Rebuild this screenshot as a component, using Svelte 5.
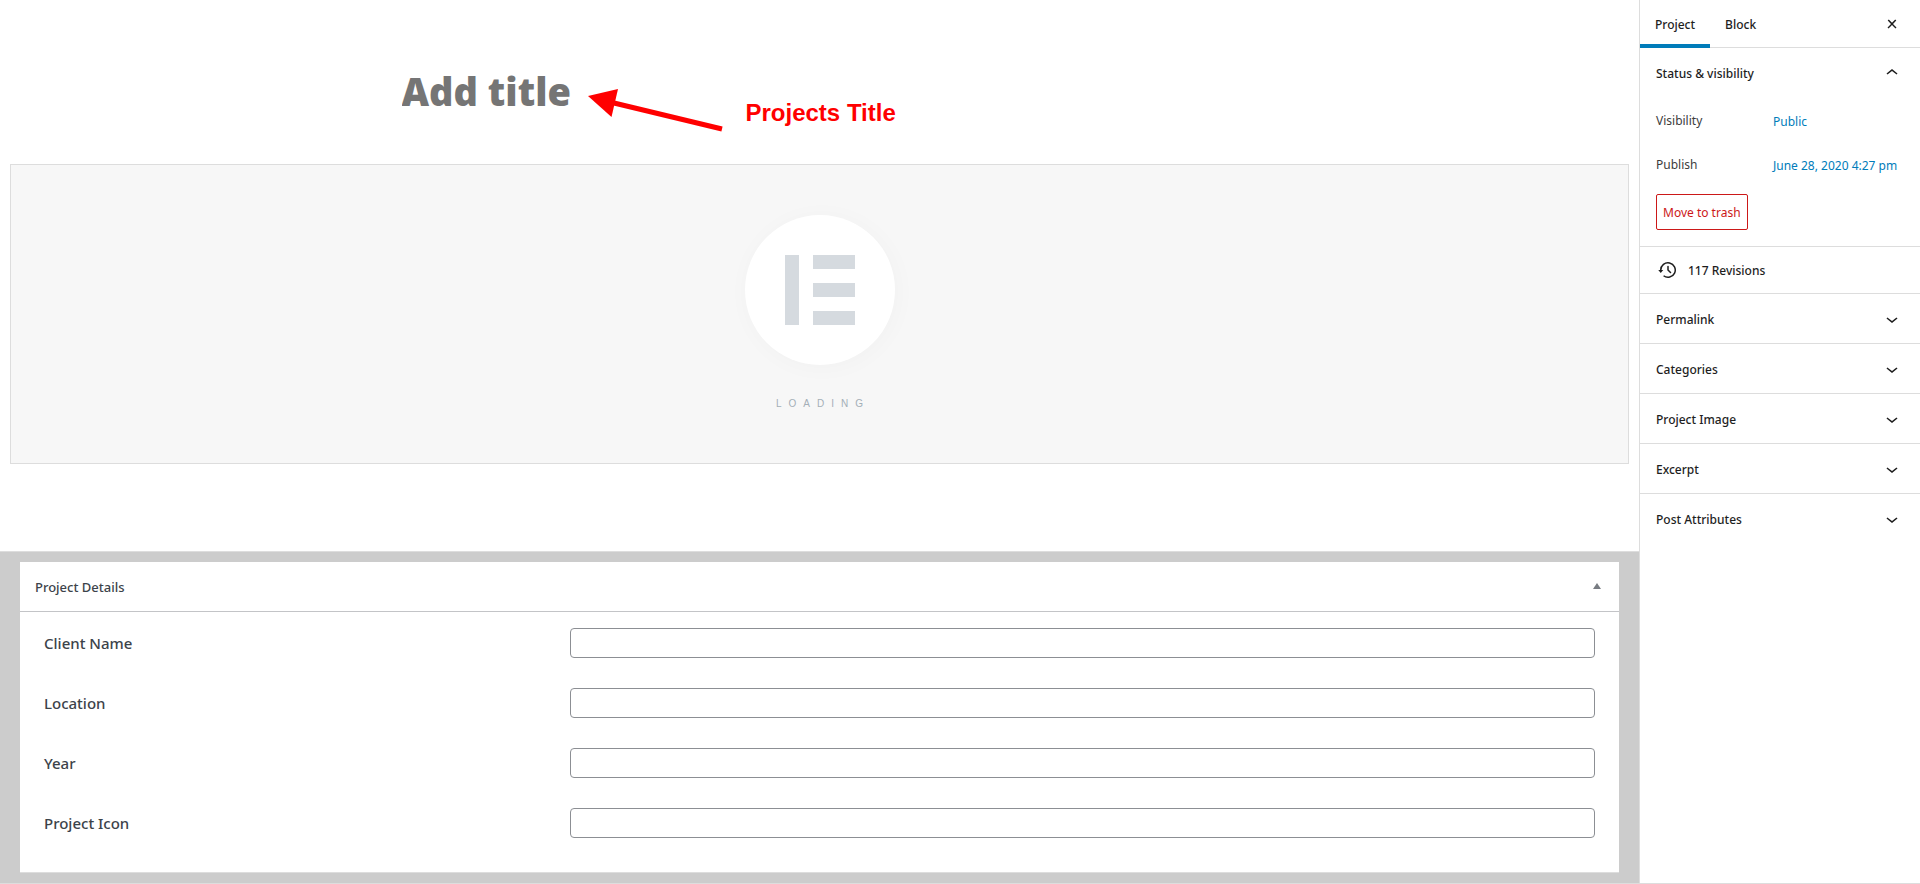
<script>
  const fields = [
    { id: 'client-name', label: 'Client Name' },
    { id: 'location', label: 'Location' },
    { id: 'year', label: 'Year' },
    { id: 'project-icon', label: 'Project Icon' }
  ];
  const panels = ['Permalink', 'Categories', 'Project Image', 'Excerpt', 'Post Attributes'];
</script>

<div class="editor">
  <main class="content">
    <section class="canvas">
      <div class="title-wrap">
        <input class="title" type="text" placeholder="Add title" aria-label="Add title" />
        <div class="note">
          <svg width="138" height="48" viewBox="0 0 138 48" aria-hidden="true">
            <path d="M27 15L135 41" stroke="#f00" stroke-width="5" fill="none" />
            <path d="M1 8L31 1L24.500 29z" fill="#f00" />
          </svg>
          <span>Projects Title</span>
        </div>
      </div>
      <div class="loader">
        <div class="disc">
          <svg width="70" height="70" viewBox="0 0 70 70" fill="#d5dadf" aria-hidden="true">
            <path d="M0 0h14v70H0zM28 0h42v14H28zM28 28h42v14H28zM28 56h42v14H28z" />
          </svg>
        </div>
        <div class="loading">LOADING</div>
      </div>
    </section>

    <section class="metaboxes">
      <div class="metabox">
        <header>
          <h2>Project Details</h2>
          <button type="button" class="toggle" aria-label="Toggle panel">
            <svg width="8" height="6" viewBox="0 0 8 6"><path d="M4 0L8 6H0z" fill="#787c82" /></svg>
          </button>
        </header>
        <form>
          {#each fields as f (f.id)}
            <div class="field">
              <label for={f.id}>{f.label}</label>
              <input id={f.id} type="text" />
            </div>
          {/each}
        </form>
      </div>
    </section>
  </main>

  <aside class="sidebar">
    <nav class="tabs">
      <button type="button" class="tab active">Project</button>
      <button type="button" class="tab">Block</button>
      <button type="button" class="close" aria-label="Close settings">
        <svg class="icon" viewBox="0 0 24 24"><path d="M13 11.900l3.300-3.400-1.100-1-3.200 3.300-3.200-3.300-1.100 1 3.300 3.400-3.500 3.600 1 1L12 13l3.500 3.500 1-1z" /></svg>
      </button>
    </nav>

    <section class="status">
      <button type="button" class="panel-head">
        <span>Status &amp; visibility</span>
        <svg class="icon" viewBox="0 0 24 24"><path d="M6.500 12.400L12 8l5.500 4.400-.900 1.200L12 10l-4.500 3.600-1-1.200z" /></svg>
      </button>
      <div class="row"><span>Visibility</span><button type="button">Public</button></div>
      <div class="row"><span>Publish</span><button type="button">June 28, 2020 4:27 pm</button></div>
      <button type="button" class="trash">Move to trash</button>
    </section>

    <button type="button" class="revisions">
      <svg class="icon" viewBox="0 0 24 24"><path d="M5.500 12h1.750l-2.500 3-2.500-3H4a8 8 0 113.134 6.350l.907-1.194A6.500 6.500 0 105.500 12zm9.530 1.970l-2.280-2.280V8.500a.750.750 0 00-1.500 0V12a.747.747 0 00.218.529l2.502 2.502a.750.750 0 101.060-1.061z" /></svg>
      <span>117 Revisions</span>
    </button>

    {#each panels as p (p)}
      <button type="button" class="panel-head bordered">
        <span>{p}</span>
        <svg class="icon" viewBox="0 0 24 24"><path d="M17.500 11.600L12 16l-5.500-4.400.900-1.200L12 14l4.500-3.600 1 1.200z" /></svg>
      </button>
    {/each}
  </aside>
</div>

<style>
  :global(body) {
    margin: 0;
    background: #fff;
  }
  .editor,
  .editor * {
    box-sizing: border-box;
  }
  .editor {
    display: flex;
    min-height: 100vh;
    border-bottom: 1px solid #ddd;
    font-family: 'Noto Sans', 'Open Sans', sans-serif;
    font-size: 12px;
    line-height: 18px;
    color: #1e1e1e;
  }
  button {
    margin: 0;
    padding: 0;
    border: 0;
    background: none;
    font: inherit;
    color: inherit;
    cursor: pointer;
  }
  .icon {
    width: 24px;
    height: 24px;
    fill: currentColor;
    flex: none;
  }
  .content {
    flex: 1;
    min-width: 0;
    display: flex;
    flex-direction: column;
  }
  .canvas {
    flex: 1;
    padding: 64px 10px 32px;
  }
  .title-wrap {
    position: relative;
    width: 100%;
    max-width: 836px;
    margin: 0 auto 46px;
  }
  .title {
    display: block;
    width: 100%;
    height: 54px;
    padding: 0;
    border: 0;
    outline: 0;
    background: none;
    font: 800 38px/54px 'Open Sans', 'Noto Sans', sans-serif;
    color: #1e1e1e;
  }
  .title::placeholder {
    color: #757575;
    opacity: 1;
  }
  .note {
    position: absolute;
    left: 185px;
    top: 24px;
    display: flex;
    gap: 21px;
    color: #f00;
    font: bold 24px/50px 'Liberation Sans', Arial, sans-serif;
    white-space: nowrap;
    pointer-events: none;
  }
  .loader {
    display: flex;
    flex-direction: column;
    align-items: center;
    gap: 30px;
    padding: 50px 0;
    height: 300px;
    border: 1px solid #ddd;
    background: #f7f7f7;
  }
  .disc {
    display: grid;
    place-items: center;
    width: 150px;
    height: 150px;
    flex: none;
    border-radius: 50%;
    background: #fff;
    box-shadow: 2px 2px 20px 4px rgba(0, 0, 0, 0.02);
  }
  .loading {
    font: 10px/18px 'Liberation Sans', Arial, sans-serif;
    letter-spacing: 7px;
    text-indent: 7px;
    color: #a4afb7;
  }
  .metaboxes {
    padding: 10px 20px;
    border-top: 1px solid #ddd;
    background: #ccc;
  }
  .metabox {
    background: #fff;
    border-bottom: 1px solid #ddd;
  }
  .metabox header {
    display: flex;
    align-items: center;
    justify-content: space-between;
    height: 50px;
    padding: 0 16px 0 15px;
    border-bottom: 1px solid #c3c4c7;
  }
  h2 {
    margin: 0;
    font-size: 13px;
    font-weight: 500;
    color: #3c434a;
  }
  .toggle {
    display: flex;
    padding: 2px 2px 4px;
  }
  form {
    display: grid;
    gap: 30px;
    padding: 16px 24px 34px;
  }
  .field {
    display: grid;
    grid-template-columns: 1fr 2fr;
    gap: 14px;
    align-items: center;
  }
  .field label {
    font-size: 15px;
    font-weight: 500;
    color: #3c434a;
  }
  .field input {
    width: 100%;
    height: 30px;
    padding: 0 8px;
    border: 1px solid #8c8f94;
    border-radius: 4px;
    background: #fff;
    font: inherit;
  }
  .sidebar {
    flex: 0 0 281px;
    border-left: 1px solid #ddd;
  }
  .tabs {
    display: flex;
    height: 48px;
    border-bottom: 1px solid #ddd;
  }
  .tab {
    height: 48px;
    padding: 2px 15px 0;
    font-weight: 500;
  }
  .tab.active {
    box-shadow: inset 0 -4px #007cba;
  }
  .close {
    display: flex;
    align-items: center;
    margin-left: auto;
    padding: 0 16px;
  }
  .panel-head {
    display: flex;
    align-items: center;
    justify-content: space-between;
    width: 100%;
    height: 50px;
    padding: 0 16px;
    font-weight: 500;
    text-align: left;
  }
  .panel-head span,
  .revisions span {
    padding-top: 2px;
  }
  .bordered {
    border-top: 1px solid #ddd;
  }
  .status {
    padding-bottom: 16px;
  }
  .row {
    display: flex;
    height: 36px;
    margin: 5px 16px 8px;
    align-items: center;
    color: #3c3c3c;
  }
  .row span {
    flex: 0 1 111px;
  }
  .row button {
    padding: 2px 6px 0;
    color: #007cba;
    white-space: nowrap;
  }
  .trash {
    display: block;
    height: 36px;
    margin: 11px 0 0 16px;
    padding: 2px 6px 0;
    border: 1px solid #cc1818;
    border-radius: 2px;
    color: #cc1818;
  }
  .revisions {
    display: flex;
    align-items: center;
    gap: 8px;
    width: 100%;
    height: 47px;
    padding: 0 16px;
    border-top: 1px solid #ddd;
    font-weight: 500;
  }
</style>
